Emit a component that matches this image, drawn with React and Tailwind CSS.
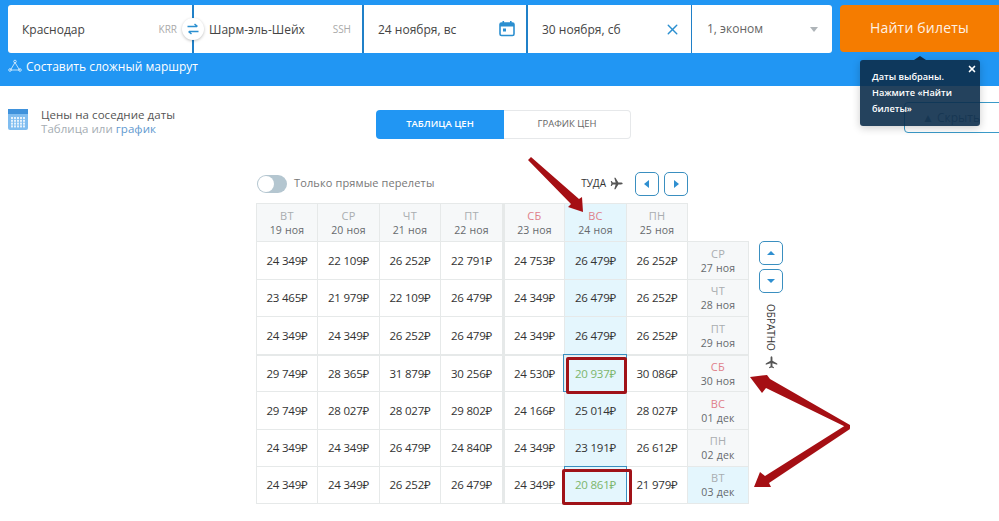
import React from "react";
import { X } from "lucide-react";

const font = { fontFamily: '"Open Sans", "Noto Sans", sans-serif' };

const days = [
  ["ВТ", "19 ноя"], ["СР", "20 ноя"], ["ЧТ", "21 ноя"], ["ПТ", "22 ноя"],
  ["СБ", "23 ноя", "red"], ["ВС", "24 ноя", "red", "sel"], ["ПН", "25 ноя"],
];
const rows = [
  { d: ["СР", "27 ноя"], p: ["24 349", "22 109", "26 252", "22 791", "24 753", "26 479", "26 252"] },
  { d: ["ЧТ", "28 ноя"], p: ["23 465", "21 979", "22 109", "26 479", "24 349", "26 479", "26 252"] },
  { d: ["ПТ", "29 ноя"], p: ["24 349", "24 349", "26 252", "26 479", "24 349", "26 479", "26 252"] },
  { d: ["СБ", "30 ноя", "red"], p: ["29 749", "28 365", "31 879", "30 256", "24 530", "20 937", "30 086"], thick: true, box: 1 },
  { d: ["ВС", "01 дек", "red"], p: ["29 749", "28 027", "28 027", "29 802", "24 166", "25 014", "28 027"] },
  { d: ["ПН", "02 дек"], p: ["24 349", "24 349", "26 479", "24 840", "24 349", "23 191", "26 612"] },
  { d: ["ВТ", "03 дек", null, "sel"], p: ["24 349", "24 349", "26 252", "26 479", "24 349", "20 861", "21 979"], box: 2 },
];

function Plane({ className }) {
  return (
    <svg viewBox="0 0 14 14" className={className} fill="currentColor">
      <path d="M13.6 7c0-.7-1-1-1.8-1H9L5.9.8H4.6L6.1 6H3L1.8 4.4H.8L1.5 7 .8 9.6h1L3 8h3.1L4.6 13.2h1.3L9 8h2.8c.8 0 1.8-.3 1.8-1z" />
    </svg>
  );
}

function Triangle({ dir }) {
  const pts = { left: "7,1 2,5 7,9", right: "3,1 8,5 3,9", up: "1,7 5,3 9,7", down: "1,3 5,7 9,3" }[dir];
  return (
    <svg viewBox="0 0 10 10" className="w-[10px] h-[10px]" fill="#2f8fd0">
      <polygon points={pts} />
    </svg>
  );
}

function NavBtn({ dir }) {
  return (
    <div className="w-[24px] h-[24px] rounded-[5px] border border-[#3a8fc0] bg-white flex items-center justify-center">
      <Triangle dir={dir} />
    </div>
  );
}

function DayCell({ d, border }) {
  const bg = d[3] === "sel" ? "bg-[#e4f6fd]" : "bg-[#f6f8f9]";
  return (
    <div className={`${bg} ${border} border-[#e6e9e9] flex flex-col items-center justify-center leading-[14px]`}>
      <span className={`text-[11px] tracking-[0.3px] ${d[2] === "red" ? "text-[#e0808a]" : "text-[#a9adb0]"}`}>{d[0]}</span>
      <span className="text-[10.5px] text-[#666a6d] tracking-[0.2px]">{d[1]}</span>
    </div>
  );
}

export default function App() {
  return (
    <div style={font} className="relative w-[999px] h-[521px] overflow-hidden bg-white text-[#333]">
      {/* Header */}
      <header className="h-[86px] bg-[#2196f3] pt-[5px]">
        <div className="flex h-[48px]">
          <div className="ml-[8px] w-[824px] h-[48px] flex rounded-[3px] overflow-hidden gap-[2px] bg-[#2080c8] text-[12px]">
            <div className="w-[184px] bg-white flex items-center pl-[14px] pt-[1px] text-[#444] relative">
              Краснодар
              <span className="absolute right-[15px] top-[17px] text-[10px] leading-[14px] text-[#aaa]">KRR</span>
            </div>
            <div className="w-[168px] bg-white flex items-center pl-[15px] pt-[1px] text-[#444] relative">
              Шарм-эль-Шейх
              <span className="absolute right-[11px] top-[17px] text-[10px] leading-[14px] text-[#aaa]">SSH</span>
            </div>
            <div className="w-[162px] bg-white flex items-center justify-between pl-[14px] pr-[11px] pt-[1px] text-[#444]">
              24 ноября, вс
              <svg viewBox="0 0 16 16" className="w-[16px] h-[17px] -mt-[2px]">
                <rect x="1" y="2.5" width="14" height="12.5" rx="1.5" fill="none" stroke="#2b8fd0" strokeWidth="1.6" />
                <rect x="1" y="2.5" width="14" height="3.5" fill="#2b8fd0" />
                <rect x="3.5" y="0.5" width="1.6" height="3" fill="#2b8fd0" />
                <rect x="11" y="0.5" width="1.6" height="3" fill="#2b8fd0" />
                <rect x="4" y="8" width="3" height="3" fill="#2b8fd0" />
              </svg>
            </div>
            <div className="w-[163px] bg-white flex items-center justify-between pl-[14px] pr-[10px] pt-[1px] text-[#444]">
              30 ноября, сб
              <X className="w-[17px] h-[17px] text-[#2b8fd0] -mt-[1px]" strokeWidth={2} />
            </div>
            <div className="flex-1 bg-white flex items-center justify-between pl-[15px] pr-[14px] text-[#666] -ml-[1px]">
              1, эконом
              <span className="w-0 h-0 border-x-[4px] border-x-transparent border-t-[5px] border-t-[#aeb4b8]" />
            </div>
          </div>
          <button className="ml-[8px] flex-1 h-[47px] bg-[#f57c00] rounded-l-[4px] text-white text-[14px] font-medium tracking-[0.2px] pb-[3px]">
            <span className="opacity-90">Найти билеты</span>
          </button>
        </div>
        <div className="mt-[4px] ml-[8px] flex items-center h-[20px] text-white text-[12px] font-medium">
          <svg viewBox="0 0 14 14" className="w-[14px] h-[14px] mr-[4px] -mt-[3px]" fill="none" stroke="#e3f2fd" strokeWidth="0.8">
            <path d="M7 3.5 2.5 11h9z" />
            <circle cx="7" cy="2.5" r="1.3" />
            <circle cx="2" cy="11" r="1.3" />
            <circle cx="12" cy="11" r="1.3" />
          </svg>
          Составить сложный маршрут
        </div>
      </header>

      {/* Title and tabs */}
      <div className="flex pt-[22px] h-[84px]">
        <div className="ml-[8px] w-[368px] flex h-[30px] items-start">
          <svg viewBox="0 0 20 22" className="w-[20px] h-[22px] mt-[1px]">
            <rect width="20" height="21" rx="2" fill="#80bdf0" />
            <rect width="20" height="5" fill="#3f92dc" />
            {[0, 1, 2, 3].map((r) => [0, 1, 2, 3, 4].map((c) => (
              <rect key={`${r}-${c}`} x={3 + c * 3} y={8 + r * 2.8} width="2" height="2" fill="#e6f2fc" />
            )))}
          </svg>
          <div className="ml-[13px] leading-[14px] text-[11.5px] tracking-[0.05px]">
            <div className="text-[#555]">Цены на соседние даты</div>
            <div className="text-[#a5adb3]">Таблица или <span className="text-[#5f9ad0]">график</span></div>
          </div>
        </div>
        <div className="flex h-[29px] mt-[2px] text-[9.5px] font-semibold">
          <div className="w-[128px] bg-[#2196f3] text-white rounded-l-[4px] flex items-center justify-center">ТАБЛИЦА ЦЕН</div>
          <div className="w-[127px] border border-l-0 border-[#e6e8ea] rounded-r-[4px] text-[#666] flex items-center justify-center font-medium">ГРАФИК ЦЕН</div>
        </div>
      </div>

      {/* Table controls */}
      <div className="ml-[257px] w-[431px] h-[33px] flex items-center -mt-[3px]">
        <div className="w-[30px] h-[18px] rounded-full bg-[#b4c6d0] relative">
          <div className="absolute left-[1px] top-[1px] w-[16px] h-[16px] rounded-full bg-white" />
        </div>
        <span className="ml-[7px] text-[11px] text-[#777] tracking-[0.12px]">Только прямые перелеты</span>
        <span className="ml-auto text-[10px] font-medium text-[#333]">ТУДА</span>
        <Plane className="w-[13px] h-[13px] ml-[4px] text-[#555]" />
        <div className="ml-[12px]"><NavBtn dir="left" /></div>
        <div className="ml-[5px]"><NavBtn dir="right" /></div>
      </div>

      {/* Table */}
      <div className="ml-[256px] mt-[3px] flex items-start">
        <div className="grid grid-cols-[62px_62px_61px_62px_62px_62px_61px_61px] grid-rows-[38px_38px_37px_38px_37px_38px_37px_38px] w-[493px] text-[11.5px] tracking-[-0.2px] text-[#333]">
          {days.map((d, i) => (
            <DayCell key={i} d={d} border={`border-t border-r ${i === 0 ? "border-l" : ""} ${i === 4 ? "border-l-2" : ""}`} />
          ))}
          <div />
          {rows.map((r, ri) => (
            <React.Fragment key={ri}>
              {r.p.map((p, ci) => {
                const sel = ci === 5;
                const green = r.box && sel;
                return (
                  <div
                    key={ci}
                    className={`relative flex items-center justify-center border-r border-[#e6e9e9] ${green ? "z-10" : ""} ${r.thick ? "border-t-2" : "border-t"} ${ri === 6 ? "border-b" : ""} ${ci === 0 ? "border-l" : ""} ${ci === 4 ? "border-l-2" : ""} ${sel ? "bg-[#e4f6fd]" : "bg-white"} ${green ? "text-[#7cb56b]" : ""}`}
                  >
                    {p}₽
                    {r.box === 1 && sel && (
                      <>
                        <div className="absolute -left-[2px] -top-[2px] -right-px -bottom-px border border-[#3a8fc0] pointer-events-none" />
                        <div className="absolute left-[1px] top-[1px] -right-px -bottom-[3px] border-[3px] border-[#a01218] rounded-[2px] pointer-events-none" />
                      </>
                    )}
                    {r.box === 2 && sel && (
                      <>
                        <div className="absolute -left-px -top-px -right-px bottom-0 border border-[#3a8fc0] pointer-events-none" />
                        <div className="absolute -left-[3px] top-[2px] -right-[6px] -bottom-[2px] border-[3px] border-[#a01218] rounded-[2px] pointer-events-none" />
                      </>
                    )}
                  </div>
                );
              })}
              <DayCell d={r.d} border={`${r.thick ? "border-t-2" : "border-t"} border-r ${ri === 6 ? "border-b" : ""}`} />
            </React.Fragment>
          ))}
        </div>
        <div className="ml-[10px] mt-[38px] w-[24px] flex flex-col items-center">
          <NavBtn dir="up" />
          <div className="mt-[4px]"><NavBtn dir="down" /></div>
          <span className="mt-[11px] text-[10px] font-medium text-[#333] [writing-mode:vertical-rl] leading-[14px]">ОБРАТНО</span>
          <Plane className="w-[13px] h-[13px] mt-[5px] text-[#555] -rotate-90" />
        </div>
      </div>

      {/* "Скрыть" button behind the hint */}
      <div className="absolute left-[904px] top-[102px] w-[110px] h-[31px] border border-[#3a9ac8] rounded-[4px] flex items-center pl-[17px] text-[12px] text-[#7d8b95]">
        ▲ Скрыть
      </div>

      {/* Hint */}
      <div className="absolute left-[860px] top-[60px] w-[120px] h-[66px] bg-[#0c2d4b]/90 rounded-[3px] text-white text-[9.2px] font-semibold leading-[16px] pl-[12px] pt-[9px] shadow-[0_2px_8px_rgba(0,0,0,0.2)]">
        <span className="absolute left-[54px] -top-[4px] w-0 h-0 border-x-[6px] border-x-transparent border-b-[4px] border-b-[#0c2d4b]" />
        <X className="absolute right-[3px] top-[4px] w-[10px] h-[10px] text-white" strokeWidth={4} />
        Даты выбраны.<br />Нажмите «Найти<br />билеты»
      </div>

      {/* Swap button */}
      <div className="absolute left-[182px] top-[18px] w-[22px] h-[22px] rounded-full bg-white shadow-[0_1px_3px_rgba(0,0,0,0.25)] flex items-center justify-center">
        <svg viewBox="0 0 12 12" className="w-[12px] h-[12px]" fill="none" stroke="#2b8fd0" strokeWidth="1.5">
          <path d="M0.5 3.5h9.5M7.5 1 10.5 3.5M11.5 8.5H2M4.5 11 1.5 8.5" />
        </svg>
      </div>

      {/* Annotation arrows */}
      <svg className="absolute left-0 top-0 pointer-events-none z-20" width="999" height="521" fill="#a50f14">
        <polygon points="528,160 531,157 579,199 582,197 583,212 568,207 571,204" />
        <polygon points="850,425 850,429 766,388 762,393 750,377 767,375 770,379" />
        <polygon points="846,425 850,429 769,483 771,487 754,487 760,472 765,476" />
      </svg>
    </div>
  );
}
